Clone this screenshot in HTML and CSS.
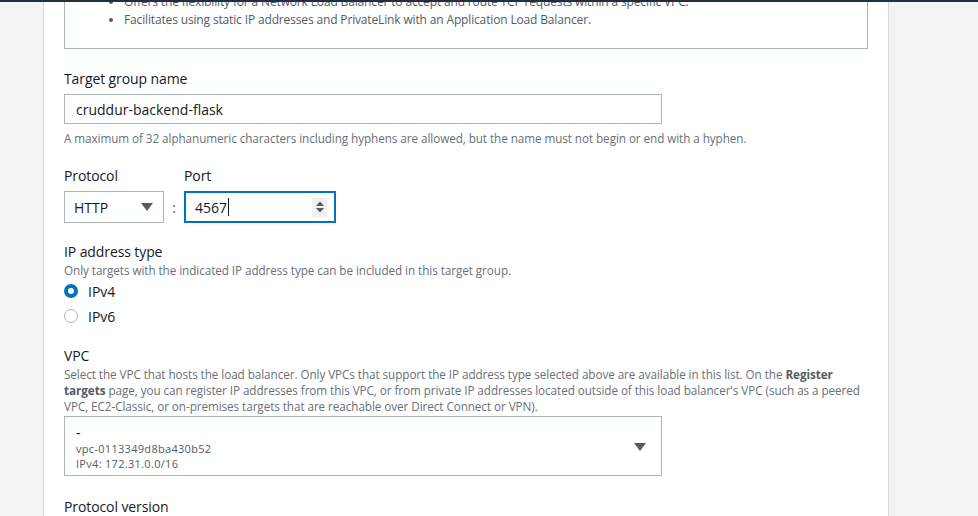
FILE: index.html
```html
<!DOCTYPE html>
<html>
<head>
<meta charset="utf-8">
<link rel="stylesheet" href="styles.css">
</head>
<body>
<div class="topbar"></div>
<div class="layout">
  <div class="gutter"></div>
  <main class="panel">
    <div class="infobox">
      <ul class="bullets">
        <li>Offers the flexibility for a Network Load Balancer to accept and route TCP requests within a specific VPC.</li>
        <li>Facilitates using static IP addresses and PrivateLink with an Application Load Balancer.</li>
      </ul>
    </div>

    <section class="field f-name">
      <div class="label">Target group name</div>
      <div class="input wide">cruddur-backend-flask</div>
      <div class="hint">A maximum of 32 alphanumeric characters including hyphens are allowed, but the name must not begin or end with a hyphen.</div>
    </section>

    <section class="field f-proto">
      <div class="proto-row">
        <div class="col">
          <div class="label">Protocol</div>
          <div class="select small">
            <span>HTTP</span>
            <svg class="caret" width="12" height="8" viewBox="0 0 12 8"><path d="M0 0h12L6 8z" fill="#545b64"/></svg>
          </div>
        </div>
        <div class="colon">:</div>
        <div class="col">
          <div class="label">Port</div>
          <div class="input port focused">
            <span class="val">4567<span class="cursor"></span></span>
            <span class="spin"><svg width="10" height="14" viewBox="0 0 10 14"><path d="M1 6L5 1.5 9 6z M1 8l4 4.5L9 8z" fill="#545b64"/></svg></span>
          </div>
        </div>
      </div>
    </section>

    <section class="field f-ip">
      <div class="label">IP address type</div>
      <div class="desc">Only targets with the indicated IP address type can be included in this target group.</div>
      <div class="radios">
        <label class="radio"><span class="dot on"></span>IPv4</label>
        <label class="radio"><span class="dot"></span>IPv6</label>
      </div>
    </section>

    <section class="field f-vpc">
      <div class="label">VPC</div>
      <div class="desc">Select the VPC that hosts the load balancer. Only VPCs that support the IP address type selected above are available in this list. On the <b>Register</b> <b>targets</b> page, you can register IP addresses from this VPC, or from private IP addresses located outside of this load balancer's VPC (such as a peered VPC, EC2-Classic, or on-premises targets that are reachable over Direct Connect or VPN).</div>
      <div class="select vpc">
        <div class="vpc-lines">
          <div class="vpc-name">-</div>
          <div class="vpc-sub">vpc-0113349d8ba430b52</div>
          <div class="vpc-sub">IPv4: 172.31.0.0/16</div>
        </div>
        <svg class="caret" width="12" height="8" viewBox="0 0 12 8"><path d="M0 0h12L6 8z" fill="#545b64"/></svg>
      </div>
    </section>

    <section class="field f-ver">
      <div class="label">Protocol version</div>
    </section>
  </main>
  <div class="side"></div>
</div>
</body>
</html>
```

FILE: styles.css
```css
* { box-sizing: border-box; }
html, body { margin: 0; padding: 0; }
body {
  background: #f2f3f3;
  font-family: "Open Sans", "Noto Sans", sans-serif;
  color: #16191f;
  height: 516px;
  overflow: hidden;
}
.topbar { height: 2px; background: #232f3e; }
.layout { display: flex; height: 514px; }
.gutter { width: 43px; flex: none; }
.panel {
  width: 846px;
  flex: none;
  background: #fff;
  border-left: 1px solid #d5dbdb;
  border-right: 1px solid #d5dbdb;
  padding: 0 20px;
  overflow: hidden;
}
.side { flex: 1; }

.infobox {
  margin-top: -24px;
  height: 71px;
  border: 1px solid #aab7b8;
  border-top: none;
  padding: 15px 0 0 24px;
}
.bullets { margin: 0; padding: 0 0 0 35px; font-size: 12px; line-height: 18px; color: #545b64; letter-spacing: -0.15px; }
.bullets li { margin: 0; padding: 0; }

.label { font-size: 14px; line-height: 20px; color: #16191f; letter-spacing: -0.1px; }
.hint, .desc { font-size: 11.7px; line-height: 16px; color: #687078; letter-spacing: -0.06px; }
.desc b { color: #545b64; font-weight: 700; }

.f-name { margin-top: 20px; }
.input {
  border: 1px solid #aab7b8;
  height: 30px;
  display: flex;
  align-items: center;
  font-size: 14px;
  color: #16191f;
}
.wide { width: 598px; margin-top: 5px; padding-left: 11px; }
.f-name .hint { margin-top: 6px; }

.f-proto { margin-top: 20px; }
.proto-row { display: flex; align-items: flex-end; }
.col .label { margin-bottom: 5px; }
.select {
  border: 1px solid #aab7b8;
  display: flex;
  align-items: center;
  justify-content: space-between;
  font-size: 14px;
}
.small { width: 100px; height: 32px; padding: 0 10px 0 9px; }
.colon { width: 20px; text-align: center; font-size: 14px; color: #545b64; height: 32px; line-height: 34px; }
.port { width: 152px; height: 32px; border: 2px solid #0073bb; padding: 0 7px 0 9px; justify-content: space-between; }
.val { display: flex; align-items: center; }
.cursor { display: inline-block; width: 1px; height: 18px; background: #16191f; margin-left: 1px; }
.spin { width: 15px; height: 19px; background: #f0f0f0; display: flex; align-items: center; justify-content: center; }

.f-ip { margin-top: 19px; }
.radios { margin-top: 3px; display: flex; flex-direction: column; gap: 5px; }
.radio { display: flex; align-items: center; font-size: 14px; height: 20px; }
.dot {
  width: 14px; height: 14px; border-radius: 50%;
  border: 1px solid #aab7b8; margin-right: 10px; background: #fff;
}
.dot.on { border: 4px solid #0073bb; }

.f-vpc { margin-top: 20px; }
.vpc { width: 598px; height: 60px; margin-top: 2px; padding: 8px 15px 0 11px; align-items: flex-start; }
.vpc .caret { margin-top: 18px; }
.vpc-name { font-size: 14px; line-height: 16px; }
.vpc-sub { font-size: 11px; line-height: 15px; color: #545b64; letter-spacing: 0.3px; }

.f-ver { margin-top: 21px; }
```
